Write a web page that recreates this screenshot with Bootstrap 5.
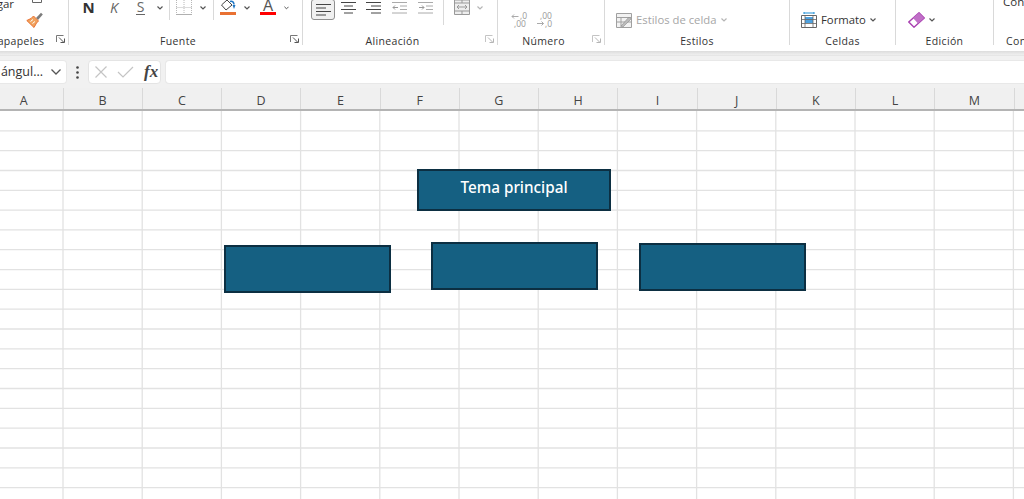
<!DOCTYPE html>
<html lang="es">
<head>
<meta charset="utf-8">
<title>Libro de Excel</title>
<link href="https://cdn.jsdelivr.net/npm/bootstrap@5.3.0/dist/css/bootstrap.min.css" rel="stylesheet">
<style>
html,body{height:499px;overflow:hidden;background:#fff}
body{font-family:"Open Sans","Noto Sans",sans-serif;color:#333}
.xl-ribbon{height:51px;margin-left:-44px;overflow:hidden;background:#fff;flex:none}
.xl-group{height:45px;flex:none;border-right:1px solid #d9d9d9}
.g1{width:113px}.g2{width:234px}.g3{width:195px}.g4{width:107px}.g5{width:185px}.g6{width:106px}.g7{width:98px}.g8{width:80px}
.xl-tools{height:34px;flex:none;overflow:hidden}
.xl-cut{height:12px;overflow:hidden}
.xl-lab{height:15px;line-height:15px;font-size:10.5px;letter-spacing:.35px;color:#333;white-space:nowrap}
.xl-lab span{flex:1 1 auto;text-align:center;min-width:0}
.xl-lab span.lab-l3{padding-right:3px}
.xl-lab span.lab-l4{padding-right:3px}
.xl-lab span.lab-r8{padding-left:8px}
.xl-launch{flex:none;margin:1px 3px 0 0}
.xl-tool{flex:none;height:15px;display:flex;align-items:center;justify-content:center}
.xs{width:1px;height:20px;background:#d9d9d9;flex:none}
.xs-tall{height:25px}
.box{margin:0;flex:none}
.tw3{width:3px}.tw5{width:5px}.tw9{width:9px}.tw11{width:11px}.tw12{width:12px}.tw19{width:19px}.tw24{width:24px}.tw25{width:25px}.tw26{width:26px}.tw27{width:27px}.tw32{width:32px}
.pad8{padding-left:8px}.pad7{padding-left:7px}.pad11{padding-left:11px}.pad12{padding-left:12px}.pad13{padding-left:13px}.pad9{padding-left:9px}
.fn-n{font-weight:700;font-size:15px;line-height:15px;color:#333}
.fn-k{font-style:italic;font-size:14.5px;line-height:15px;color:#666}
.fn-s{font-size:14px;line-height:13px;color:#666;border-bottom:1px solid #666;height:15px;width:9px;text-align:center}
.xl-sel{height:21px;margin-top:-1px;background:#f0f0f0;border:1px solid #8f8f8f;border-radius:3px}
.xl-word{font-size:11.3px;line-height:16px;white-space:nowrap}
.xl-mut{color:#a6a6a6}
.xl-gar{width:58px;text-align:right;font-size:11.5px;line-height:14px;margin-top:-3px;color:#333;white-space:nowrap;flex:none}
.xl-brush{margin-left:12px}
.xl-clip{margin-left:6px}
.xl-con{font-size:11.5px;line-height:14px;margin-top:-5px;color:#333;white-space:nowrap}
.xl-shade{height:4px;flex:none;background:linear-gradient(#dcdcdc,#efefef)}
.xl-fbar{height:33px;flex:none;background:#f1f1f1;padding-top:4px;border-top:1px solid #e6e6e6}
.xl-name{width:67px;height:24px;flex:none;background:#fff;border-radius:0 4px 4px 0;border:1px solid #e8e8e8;border-left:0;overflow:hidden;font-size:12.5px;line-height:22px;white-space:nowrap;color:#333;padding-right:5px}
.xl-dots{width:21px;height:24px;flex:none}
.xl-fx{width:73px;height:24px;flex:none;background:#fff;border:1px solid #e4e4e4;border-radius:4px;margin-right:4px}
.xl-x{margin-left:5px}
.xl-check{margin-left:9px}
.xl-fxt{margin-left:10px;font-family:"Liberation Serif",serif;font-style:italic;font-weight:700;font-size:17px;line-height:20px;color:#444}
.xl-input.form-control{height:24px;min-height:24px;border:1px solid #e8e8e8;border-right:0;border-radius:4px 0 0 4px;padding:0 6px;font-size:12px}
.xl-head{height:23px;flex:none;background:#f0f0f0;border-bottom:2px solid #b4b4b4;overflow:hidden}
.xl-col{width:79.25px;flex:none;border-right:1px solid #d9d9d9;font-size:12.5px;line-height:21px;padding-top:2px;text-align:center;color:#444}
.xl-col.first{width:63.5px;padding-right:15px}
.xl-sheet{flex:1 1 auto;position:relative;overflow:hidden;background-color:#fff}
.xl-lines{position:absolute;left:0;top:0}
.xl-shape{position:absolute;background:#156082;border:2px solid #0c2f42;color:#fff;display:flex;align-items:center;justify-content:center}
.sh-top{left:417px;top:58px;width:194px;height:42px;font-family:"Noto Sans",sans-serif;font-weight:500;font-size:15.3px;padding-bottom:5px}
.sh-a{left:224px;top:134px;width:167px;height:48px}
.sh-b{left:431px;top:131px;width:167px;height:48px}
.sh-c{left:639px;top:132px;width:167px;height:48px}
</style>
</head>
<body class="d-flex flex-column">
<svg width="0" height="0" class="position-absolute">
 <defs>
  <symbol id="chev" viewBox="0 0 6 4"><path d="M.5.5 3 3 5.5.5" fill="none" stroke="#555" stroke-width="1.2"/></symbol>
  <symbol id="chevl" viewBox="0 0 6 4"><path d="M.5.5 3 3 5.5.5" fill="none" stroke="#b5b5b5" stroke-width="1.2"/></symbol>
  <symbol id="launch" viewBox="0 0 9 8"><path d="M.5 7V.5H7.5" fill="none" stroke="#777"/><path d="M8.5 3.5v4h-4M3 2.5l4.5 4.5" fill="none" stroke="#555"/></symbol>
  <symbol id="launchl" viewBox="0 0 9 8"><path d="M.5 7V.5H7.5" fill="none" stroke="#c4c4c4"/><path d="M8.5 3.5v4h-4M3 2.5l4.5 4.5" fill="none" stroke="#b5b5b5"/></symbol>
 </defs>
</svg>

<div class="xl-ribbon d-flex">
 <section class="xl-group g1">
  <div class="xl-tools d-flex">
   <div class="xl-gar">Pegar</div>
   <div class="d-flex flex-column xl-brush">
    <svg class="box xl-clip" width="10" height="12" viewBox="0 0 10 12"><path d="M.5 0v2.500h9V0" fill="none" stroke="#666"/></svg>
    <svg class="box" width="17" height="16" viewBox="0 0 17 16">
     <path d="M10 6 15 .8 16.800 2.500 12 8z" fill="#7c7c7c"/>
     <path d="M7.500 4 12.500 9 10.500 11 8 15.500 .8 8.500 5 6.500z" fill="#f0a35e" stroke="#e97132"/>
     <path d="M4.500 9.500 7 7.500M6.500 11.500 9 9.500" stroke="#fff"/>
    </svg>
   </div>
  </div>
  <div class="xl-lab d-flex"><span class="lab-r8">Portapapeles</span><svg class="xl-launch" width="9" height="8"><use href="#launch"/></svg></div>
 </section>

 <section class="xl-group g2">
  <div class="xl-tools d-flex pad7">
   <div class="xl-tool tw25"><span class="fn-n">N</span></div>
   <div class="xl-tool tw26"><span class="fn-k">K</span></div>
   <div class="xl-tool tw27"><span class="fn-s">S</span></div>
   <div class="xl-tool tw11"><svg width="6" height="4"><use href="#chev"/></svg></div>
   <div class="tw9 d-flex justify-content-center"><div class="xs"></div></div>
   <div class="xl-tool tw19"><svg width="16" height="15" viewBox="0 0 16 15"><path d="M.5 0v14.500M15.500 0v14.500M8 0v14.500M.5 7.500h15" fill="none" stroke="#b8b8b8" stroke-dasharray="1 1"/><path d="M0 14.500h16" stroke="#b0b0b0"/></svg></div>
   <div class="xl-tool tw19"><svg width="6" height="4"><use href="#chev"/></svg></div>
   <div class="tw3 d-flex justify-content-center"><div class="xs"></div></div>
   <div class="xl-tool tw26"><svg width="16" height="15" viewBox="0 0 16 15"><path d="M7 0 1.500 5 6 10 12 5z" fill="#fff" stroke="#444"/><path d="M10 1.500c2.500-1 4 1 4 3" fill="none" stroke="#1f77c4" stroke-width="1.500"/><path d="M12.500 5h3l-1.500 4z" fill="#1f77c4"/><rect x="0" y="12" width="16" height="3" fill="#e97132"/></svg></div>
   <div class="xl-tool tw11"><svg width="6" height="4"><use href="#chev"/></svg></div>
   <div class="xl-tool tw32"><svg width="16" height="15" viewBox="0 0 16 15"><text x="8" y="11" text-anchor="middle" font-family="Open Sans" font-size="16" fill="#555">A</text><rect x="0" y="12" width="16" height="3" fill="#f00"/></svg></div>
   <div class="xl-tool tw5"><svg width="6" height="4"><use href="#chev"/></svg></div>
  </div>
  <div class="xl-lab d-flex"><span class="lab-l3">Fuente</span><svg class="xl-launch" width="9" height="8"><use href="#launch"/></svg></div>
 </section>

 <section class="xl-group g3">
  <div class="xl-tools d-flex pad8">
   <div class="xl-tool tw24 xl-sel"><svg width="15" height="13" viewBox="0 0 15 13"><path d="M0 1.500h15M0 5h10M0 8.500h15M0 12h10" stroke="#444"/></svg></div>
   <div class="xl-tool tw26"><svg width="15" height="13" viewBox="0 0 15 13"><path d="M0 1.500h15M3 5h9M0 8.500h15M3 12h9" stroke="#444"/></svg></div>
   <div class="xl-tool tw25"><svg width="15" height="13" viewBox="0 0 15 13"><path d="M0 1.500h15M5 5h10M0 8.500h15M5 12h10" stroke="#444"/></svg></div>
   <div class="xl-tool tw26"><svg width="15" height="13" viewBox="0 0 15 13"><path d="M0 1.500h15M8 5h7M8 8.500h7M0 12h15" stroke="#aaa"/><path d="M6 6.500H1M3 4.500 1 6.500l2 2" fill="none" stroke="#999"/></svg></div>
   <div class="xl-tool tw26"><svg width="15" height="13" viewBox="0 0 15 13"><path d="M0 1.500h15M8 5h7M8 8.500h7M0 12h15" stroke="#aaa"/><path d="M1 6.500h5M4 4.500l2 2-2 2" fill="none" stroke="#999"/></svg></div>
   <div class="tw11 d-flex justify-content-center"><div class="xs xs-tall"></div></div>
   <div class="xl-tool tw25"><svg width="16" height="15" viewBox="0 0 16 15"><path d="M.5 0v14.500h15V0zM.5 3h15M.5 11h15M8 0v3M8 11v4" fill="#eee" stroke="#999"/><path d="M3 7h10M5 5l-2 2 2 2M11 5l2 2-2 2" fill="none" stroke="#999"/></svg></div>
   <div class="xl-tool tw12"><svg width="6" height="4"><use href="#chevl"/></svg></div>
  </div>
  <div class="xl-lab d-flex"><span class="lab-l4">Alineación</span><svg class="xl-launch" width="9" height="8"><use href="#launchl"/></svg></div>
 </section>

 <section class="xl-group g4">
  <div class="xl-tools pad13">
   <div class="xl-cut"><svg width="60" height="3" viewBox="0 0 60 3"><path d="M6 0v2M28 0c0 2 2 2 2 0M36 0c0 2 2 2 2 0" fill="none" stroke="#aaa"/></svg></div>
   <div class="d-flex gap-2">
    <svg width="17" height="16" viewBox="0 0 17 16"><path d="M7.500 4.500H1M3 2.500 1 4.500l2 2" fill="none" stroke="#aaa"/><text font-family="Open Sans" font-size="8.500" fill="#999"><tspan x="9" y="7">,0</tspan><tspan x="3" y="15">,00</tspan></text></svg>
    <svg width="17" height="16" viewBox="0 0 17 16"><path d="M1 11.500h6.500M5.500 9.500l2 2-2 2" fill="none" stroke="#aaa"/><text font-family="Open Sans" font-size="8.500" fill="#999"><tspan x="4" y="7">,00</tspan><tspan x="9" y="15">,0</tspan></text></svg>
   </div>
  </div>
  <div class="xl-lab d-flex"><span class="lab-l4">Número</span><svg class="xl-launch" width="9" height="8"><use href="#launchl"/></svg></div>
 </section>

 <section class="xl-group g5">
  <div class="xl-tools pad11">
   <div class="xl-cut"><svg width="16" height="3" viewBox="0 0 16 3"><path d="M0 2.500h14M1 0v2M6 0v2" stroke="#aaa"/></svg></div>
   <div class="d-flex align-items-center gap-1">
    <svg width="16" height="16" viewBox="0 0 16 16"><path d="M.5 1.500h15v14H.5zM.5 5.500h15M.5 10h15M5 5.500v10" fill="#f2f2f2" stroke="#a0a0a0"/><path d="M5 14 13 5l2 2-8 8z" fill="#bbb" stroke="#8c8c8c" stroke-width=".6"/></svg>
    <span class="xl-word xl-mut">Estilos de celda</span>
    <svg width="6" height="4"><use href="#chevl"/></svg>
   </div>
  </div>
  <div class="xl-lab d-flex"><span>Estilos</span></div>
 </section>

 <section class="xl-group g6">
  <div class="xl-tools pad11">
   <div class="xl-cut"><svg width="16" height="3" viewBox="0 0 16 3"><path d="M0 2.500h16" stroke="#777"/></svg></div>
   <div class="d-flex align-items-center gap-1">
    <svg width="16" height="16" viewBox="0 0 16 16"><path d="M.5 3.500h15v12H.5z" fill="#fff" stroke="#666"/><rect x="4" y="5" width="8" height="6" fill="#4ea2e0"/><path d="M.5 7.500h15M.5 11.500h15M4 3.500v12M12 3.500v12" fill="none" stroke="#666" stroke-width=".8"/><path d="M3 1h10M3 0v2M13 0v2" stroke="#1f8fd6"/></svg>
    <span class="xl-word">Formato</span>
    <svg width="6" height="4"><use href="#chev"/></svg>
   </div>
  </div>
  <div class="xl-lab d-flex"><span>Celdas</span></div>
 </section>

 <section class="xl-group g7">
  <div class="xl-tools pad12">
   <div class="xl-cut"><svg width="60" height="3" viewBox="0 0 60 3"><path d="M0 2.500h16" stroke="#777"/><path d="M40 0c0 2 3 2 3 0" fill="none" stroke="#555"/></svg></div>
   <div class="d-flex align-items-center gap-1">
    <svg width="17" height="16" viewBox="0 0 17 16"><path d="M11 .8 16.200 6 6 15.200 .8 10z" fill="#fff" stroke="#a83fb0" stroke-width="1.400"/><path d="M11 .8 16.200 6 10 11.500 5 6z" fill="#c06fc7"/></svg>
    <svg width="6" height="4"><use href="#chev"/></svg>
   </div>
  </div>
  <div class="xl-lab d-flex"><span>Edición</span></div>
 </section>

 <section class="g8 flex-none">
  <div class="xl-tools pad9"><div class="xl-con">Confidencialidad</div></div>
  <div class="xl-lab pad12">Confidencialidad</div>
 </section>
</div>

<div class="xl-shade"></div>

<div class="xl-fbar d-flex">
 <div class="xl-name d-flex justify-content-end align-items-center">
  <span class="me-2">ángul...</span>
  <svg width="10" height="6" viewBox="0 0 10 6"><path d="M.5.500 5 5 9.500.5" fill="none" stroke="#555" stroke-width="1.300"/></svg>
 </div>
 <div class="xl-dots d-flex align-items-center justify-content-center">
  <svg width="3" height="13" viewBox="0 0 3 13"><circle cx="1.500" cy="1.500" r="1.300" fill="#444"/><circle cx="1.500" cy="6.500" r="1.300" fill="#444"/><circle cx="1.500" cy="11.500" r="1.300" fill="#444"/></svg>
 </div>
 <div class="xl-fx d-flex align-items-center">
  <svg class="xl-x" width="14" height="14" viewBox="0 0 14 14"><path d="M1.500 1.500l11 11M12.500 1.500l-11 11" stroke="#c4c4c4" stroke-width="1.200"/></svg>
  <svg class="xl-check" width="17" height="14" viewBox="0 0 17 14"><path d="M1 7l5 5L16 2" fill="none" stroke="#c4c4c4" stroke-width="1.200"/></svg>
  <span class="xl-fxt">fx</span>
 </div>
 <input class="form-control xl-input flex-fill" type="text" aria-label="Barra de fórmulas">
</div>

<div class="xl-head d-flex">
 <div class="xl-col first">A</div><div class="xl-col">B</div><div class="xl-col">C</div><div class="xl-col">D</div><div class="xl-col">E</div><div class="xl-col">F</div><div class="xl-col">G</div><div class="xl-col">H</div><div class="xl-col">I</div><div class="xl-col">J</div><div class="xl-col">K</div><div class="xl-col">L</div><div class="xl-col">M</div><div class="xl-col">N</div>
</div>

<div class="xl-sheet">
 <svg class="xl-lines" width="1024" height="388" viewBox="0 0 1024 388" aria-hidden="true">
  <path fill="none" stroke="#e2e2e2" stroke-width="1.300" d="M63 0V388M142.200 0V388M221.400 0V388M300.600 0V388M379.800 0V388M459 0V388M538.200 0V388M617.400 0V388M696.600 0V388M775.800 0V388M855 0V388M934.200 0V388M1013.400 0V388M0 19.800H1024M0 39.600H1024M0 59.500H1024M0 79.300H1024M0 99.100H1024M0 118.900H1024M0 138.700H1024M0 158.600H1024M0 178.400H1024M0 198.200H1024M0 218H1024M0 237.800H1024M0 257.700H1024M0 277.500H1024M0 297.300H1024M0 317.100H1024M0 337H1024M0 356.800H1024M0 376.600H1024"/>
 </svg>
 <div class="xl-shape sh-top">Tema principal</div>
 <div class="xl-shape sh-a"></div>
 <div class="xl-shape sh-b"></div>
 <div class="xl-shape sh-c"></div>
</div>
<script src="https://cdn.jsdelivr.net/npm/bootstrap@5.3.0/dist/js/bootstrap.bundle.min.js"></script>
</body>
</html>
